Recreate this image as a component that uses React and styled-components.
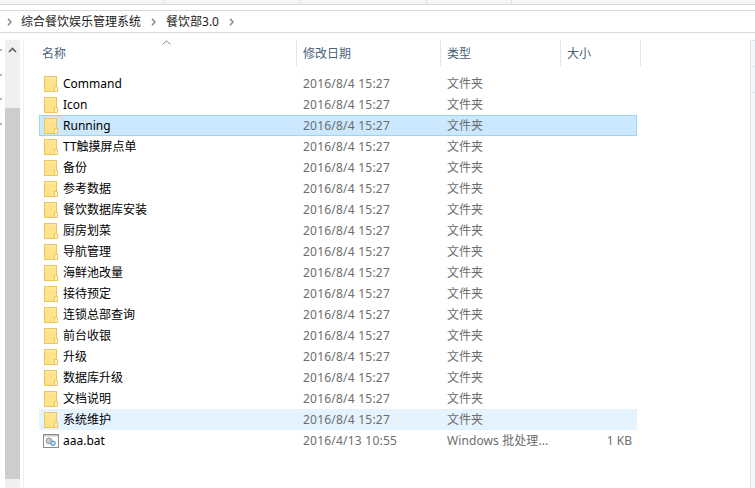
import React from "react";
import styled, { createGlobalStyle } from "styled-components";

const Global = createGlobalStyle`
  html, body { margin: 0; padding: 0; background: #fff; }
  body { font-family: "Noto Sans", "Noto Sans CJK SC", sans-serif; font-size: 12px; }
`;

const Window = styled.div`
  width: 755px; height: 488px; overflow: hidden; display: flex; flex-direction: column; background: #fff;
`;
const Ribbon = styled.div`
  height: 4px; background: #f5f6f7; border-bottom: 1px solid #d9d9d9; display: flex;
`;
const RibbonCell = styled.div`
  width: ${p => p.$w}px; height: 4px; border-right: 1px solid #e2e3e5; box-sizing: border-box;
`;
const AddressBar = styled.div`
  margin-top: 5px; height: 21px; border-top: 1px solid #d9d9d9; border-bottom: 1px solid #d9d9d9;
  display: flex; align-items: center; padding-left: 7px; color: #1a1a1a; line-height: 21px;
`;
const Crumb = styled.span`
  margin: 0 ${p => p.$after}px 0 ${p => p.$before}px; letter-spacing: 0; white-space: nowrap;
`;
const Main = styled.div`
  flex: 1; min-height: 0; display: flex; padding-top: 7px;
`;
const Gutter = styled.div`
  width: 5px; display: flex; flex-direction: column; gap: 22.5px; padding-top: 9px;
`;
const Tick = styled.div`
  width: 2px; height: 2px; background: #b4b4b4;
`;
const Scrollbar = styled.div`
  width: 15px; background: #f0f0f0; display: flex; flex-direction: column; height: 448px;
`;
const ScrollBtn = styled.div`
  height: 20px; display: flex; align-items: center; justify-content: center;
`;
const Thumb = styled.div`
  margin-top: 48px; height: 371px; background: #cdcdcd;
`;
const Divider = styled.div`
  width: 1px; margin-left: 3px; background: #f0f0f0; height: 448px;
`;
const Content = styled.div`
  flex: 1; min-width: 0; padding-left: 15px; display: flex; flex-direction: column;
`;
const Header = styled.div`
  position: relative; display: flex; height: 26px; color: #4c607a; width: 602px;
`;
const HeadCell = styled.div`
  width: ${p => p.$w}px; padding-left: ${p => p.$pad}px; box-sizing: border-box; line-height: 27px;
  border-right: 1px solid #e5e5e5; white-space: nowrap;
`;
const SortCaret = styled.svg`
  position: absolute; left: 123px; top: 0; 
`;
const List = styled.div`
  margin-top: 7px; display: flex; flex-direction: column; width: 598px;
`;
const Row = styled.div`
  height: 21px; box-sizing: border-box; display: grid; grid-template-columns: 264px 144px 120px 70px;
  align-items: center; line-height: 19px;
  background: ${p => (p.$state === "selected" ? "#cce8ff" : p.$state === "hover" ? "#e5f3ff" : "transparent")};
  box-shadow: ${p => (p.$state === "selected" ? "inset 0 0 0 1px #99d1ff" : "none")};
`;
const NameCell = styled.div`
  display: flex; align-items: center; color: #000; white-space: nowrap;
`;
const IconSlot = styled.div`
  width: 24px; display: flex; justify-content: center; flex: none; height: 21px; align-items: center;
`;
const MetaCell = styled.div`
  color: #6d6d6d; white-space: nowrap; overflow: hidden;
`;
const DateCell = styled(MetaCell)`
  letter-spacing: 0.22px;
`;
const TypeCell = styled(MetaCell)`
  letter-spacing: 0.1px;
`;
const SizeCell = styled(MetaCell)`
  text-align: right; padding-right: 5px;
`;
const Preview = styled.div`
  width: 5px; display: flex; flex-direction: column; background: #f2f7fc; border-left: 1px solid #dce6f2;
  border-top: 1px solid #dce6f2; height: 448px; box-sizing: border-box;
`;
const PreviewCell = styled.div`
  height: 25px; border-bottom: 1px solid #dce6f2;
`;

const Chevron = () => (
  <svg width="5" height="8" viewBox="0 0 5 8" style={{ flex: "none" }}>
    <path d="M1 .8 4 4 1 7.2" fill="none" stroke="#8a8a8a" strokeWidth="1.5" />
  </svg>
);

const Folder = () => (
  <svg width="14" height="16" viewBox="0 0 14 16">
    <rect x=".5" y=".5" width="12" height="15" fill="#ffe38c" stroke="#ecc658" />
    <rect x="1.5" y="1.5" width="10" height="1" fill="#fff0b8" />
    <path d="M10.5 15.5v-5h3v5z" fill="#fff3c4" stroke="#ecc658" />
  </svg>
);

const BatFile = () => (
  <svg width="16" height="14" viewBox="0 0 16 14">
    <rect x=".5" y=".5" width="15" height="13" fill="#fff" stroke="#8c8c8c" />
    <rect x="1" y="1" width="14" height="1.5" fill="#c9c9c9" />
    <circle cx="6" cy="6.8" r="2.8" fill="#d8d8d8" stroke="#8e8e8e" />
    <circle cx="6" cy="6.8" r="1" fill="#fff" stroke="#999" strokeWidth=".6" />
    <circle cx="10" cy="9.3" r="2.3" fill="#9fd0ee" stroke="#4a97cc" />
    <circle cx="10" cy="9.3" r=".8" fill="#fff" />
  </svg>
);

const DATE = "2016/8/4 15:27";
const names = [
  "Command", "Icon", "Running", "TT触摸屏点单", "备份", "参考数据", "餐饮数据库安装", "厨房划菜", "导航管理",
  "海鲜池改量", "接待预定", "连锁总部查询", "前台收银", "升级", "数据库升级", "文档说明", "系统维护",
];

export default function App() {
  return (
    <Window>
      <Global />
      <Ribbon>
        <RibbonCell $w={164} />
        <RibbonCell $w={136} />
        <RibbonCell $w={127} />
        <RibbonCell $w={85} />
      </Ribbon>
      <AddressBar>
        <Chevron />
        <Crumb $before={9} $after={10}>综合餐饮娱乐管理系统</Crumb>
        <Chevron />
        <Crumb $before={10} $after={10}>餐饮部3.0</Crumb>
        <Chevron />
      </AddressBar>
      <Main>
        <Gutter>
          <Tick /><Tick /><Tick /><Tick />
        </Gutter>
        <Scrollbar>
          <ScrollBtn>
            <svg width="9" height="6" viewBox="0 0 9 6">
              <path d="M1 5 4.5 1.5 8 5" fill="none" stroke="#606060" strokeWidth="1.6" />
            </svg>
          </ScrollBtn>
          <Thumb />
        </Scrollbar>
        <Divider />
        <Content>
          <Header>
            <SortCaret width="9" height="5" viewBox="0 0 9 5">
              <path d="M.5 4.5 4.5.8 8.5 4.5" fill="none" stroke="#7f8a99" strokeWidth="1" />
            </SortCaret>
            <HeadCell $w={258} $pad={3}>名称</HeadCell>
            <HeadCell $w={144} $pad={6}>修改日期</HeadCell>
            <HeadCell $w={120} $pad={6}>类型</HeadCell>
            <HeadCell $w={80} $pad={6}>大小</HeadCell>
          </Header>
          <List>
            {names.map((n) => (
              <Row key={n} $state={n === "Running" ? "selected" : n === "系统维护" ? "hover" : undefined}>
                <NameCell><IconSlot><Folder /></IconSlot>{n}</NameCell>
                <DateCell>{DATE}</DateCell>
                <MetaCell>文件夹</MetaCell>
                <SizeCell />
              </Row>
            ))}
            <Row>
              <NameCell><IconSlot><BatFile /></IconSlot>aaa.bat</NameCell>
              <DateCell>2016/4/13 10:55</DateCell>
              <TypeCell>Windows 批处理...</TypeCell>
              <SizeCell>1 KB</SizeCell>
            </Row>
          </List>
        </Content>
        <Preview>
          <PreviewCell />
          <PreviewCell />
        </Preview>
      </Main>
    </Window>
  );
}
